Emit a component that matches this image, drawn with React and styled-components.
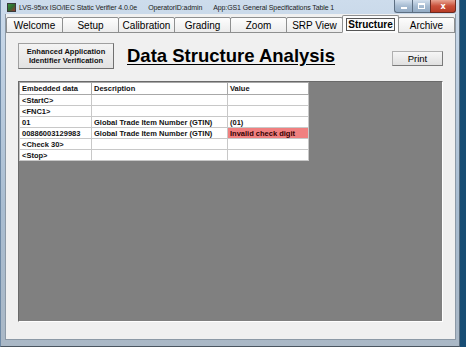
import React from "react";
import styled, { createGlobalStyle } from "styled-components";

const Global = createGlobalStyle`
  html, body { margin: 0; padding: 0; }
  body {
    width: 466px;
    height: 347px;
    overflow: hidden;
    background: #1f5d86;
    font-family: "Liberation Sans", Arial, sans-serif;
  }
`;

const tabs = ["Welcome", "Setup", "Calibration", "Grading", "Zoom", "SRP View", "Structure", "Archive"];

const rows = [
  { data: "<StartC>", desc: "", value: "" },
  { data: "<FNC1>", desc: "", value: "" },
  { data: "01", desc: "Global Trade Item Number (GTIN)", value: "(01)" },
  { data: "00886003129983", desc: "Global Trade Item Number (GTIN)", value: "Invalid check digit", error: true },
  { data: "<Check 30>", desc: "", value: "" },
  { data: "<Stop>", desc: "", value: "" },
];

const App = () => {
  return (
    <>
      <Global />
      <Desktop>
        <Frame>
          <TitleBar>
            <AppIcon />
            <TitleText>LVS-95xx ISO/IEC Static Verifier 4.0.0e</TitleText>
            <TitleText>OperatorID:admin</TitleText>
            <TitleText>App:GS1 General Specifications Table 1</TitleText>
            <Controls>
              <CtrlButton>
                <MinGlyph />
              </CtrlButton>
              <CtrlButton>
                <MaxGlyph />
              </CtrlButton>
              <CloseButton>x</CloseButton>
            </Controls>
          </TitleBar>

          <Client>
            <TabRow>
              {tabs.map((t) => (
                <Tab key={t} $active={t === "Structure"}>
                  {t === "Structure" ? <Focus>{t}</Focus> : t}
                </Tab>
              ))}
            </TabRow>

            <Page>
              <Header>
                <AiButton>
                  Enhanced Application
                  <br />
                  Identifier Verification
                </AiButton>
                <Heading>Data Structure Analysis</Heading>
                <PrintButton>Print</PrintButton>
              </Header>

              <GrayPanel>
                <Table>
                  <colgroup>
                    <col style={{ width: "72px" }} />
                    <col style={{ width: "136px" }} />
                    <col style={{ width: "81px" }} />
                  </colgroup>
                  <thead>
                    <tr>
                      <Th>Embedded data</Th>
                      <Th>Description</Th>
                      <Th>Value</Th>
                    </tr>
                  </thead>
                  <tbody>
                    {rows.map((r, i) => (
                      <tr key={i}>
                        <Td>{r.data}</Td>
                        <Td>{r.desc}</Td>
                        <Td $error={r.error}>{r.value}</Td>
                      </tr>
                    ))}
                  </tbody>
                </Table>
              </GrayPanel>
            </Page>
          </Client>
        </Frame>
      </Desktop>
    </>
  );
};

const Desktop = styled.div`
  width: 466px;
  height: 347px;
  display: flex;
  background: linear-gradient(90deg, #2a6d96, #174d74);
`;

const Frame = styled.div`
  width: 460px;
  height: 347px;
  box-sizing: border-box;
  display: flex;
  flex-direction: column;
  padding: 0 3px 6px 4px;
  background: linear-gradient(180deg, #cddcec 0%, #bfd0e2 20%, #a9bdd1 60%, #aab8c6 100%);
  border-right: 1px solid #5a6c7c;
  border-bottom: 1px solid #4a5560;
  border-left: 1px solid #6f8aa6;
`;

const TitleBar = styled.div`
  height: 14px;
  display: flex;
  align-items: center;
  gap: 11px;
  padding-left: 2px;
  position: relative;
`;

const AppIcon = styled.div`
  width: 7px;
  height: 7px;
  background: linear-gradient(135deg, #3b8f3b 0%, #2f6c2f 50%, #9c3030 100%);
  border: 1px solid #3a3a3a;
  margin-right: -8px;
`;

const TitleText = styled.span`
  font-family: "Liberation Sans", Arial, sans-serif;
  font-size: 7px;
  letter-spacing: -0.1px;
  color: #1b1b1b;
  white-space: nowrap;
`;

const Controls = styled.div`
  position: absolute;
  right: 0;
  top: 0;
  display: flex;
`;

const CtrlButton = styled.div`
  width: 17px;
  height: 12px;
  display: flex;
  align-items: center;
  justify-content: center;
  background: linear-gradient(180deg, #d3e0ee 0%, #a7bcd2 50%, #93abc4 100%);
  border: 1px solid #5d6f82;
  border-top: none;
  border-right: none;
  &:first-child { border-bottom-left-radius: 3px; }
`;

const MinGlyph = styled.span`
  width: 6px;
  height: 2px;
  margin-top: 4px;
  background: #fff;
`;

const MaxGlyph = styled.span`
  width: 5px;
  height: 3px;
  border: 1px solid #fff;
  border-top-width: 2px;
`;

const CloseButton = styled.div`
  width: 24px;
  height: 12px;
  display: flex;
  align-items: center;
  justify-content: center;
  font-family: "DejaVu Sans", sans-serif;
  font-weight: bold;
  font-size: 8px;
  color: #fff;
  background: linear-gradient(180deg, #e8a593 0%, #c9503a 50%, #b83b25 100%);
  border: 1px solid #6b2a20;
  border-top: none;
  border-bottom-right-radius: 3px;
`;

const Client = styled.div`
  flex: 1;
  display: flex;
  flex-direction: column;
  background: #f0f0f0;
  border: 1px solid #8c99a6;
  border-top: none;
`;

const TabRow = styled.div`
  display: flex;
  align-items: flex-end;
  height: 19px;
  margin-bottom: -1px;
  position: relative;
  z-index: 1;
`;

const Tab = styled.div`
  flex: 1;
  height: ${(p) => (p.$active ? "18px" : "16px")};
  box-sizing: border-box;
  display: flex;
  align-items: center;
  justify-content: center;
  font-size: 10px;
  font-weight: ${(p) => (p.$active ? "bold" : "normal")};
  color: #000;
  background: ${(p) => (p.$active ? "#fbfbfb" : "linear-gradient(180deg, #fdfdfd 0%, #ececec 100%)")};
  border: 1px solid #8e8f8f;
  border-bottom: ${(p) => (p.$active ? "1px solid #fbfbfb" : "1px solid #8e8f8f")};
  border-radius: 2px 2px 0 0;
  margin-left: -1px;
  &:first-child { margin-left: 0; }
`;

const Focus = styled.span`
  border: 1px solid #555;
  padding: 0 1px;
  line-height: 11px;
`;

const Page = styled.div`
  flex: 1;
  display: flex;
  flex-direction: column;
  padding: 10px 12px 17px 12px;
  background: #f0f0f0;
  border-top: 1px solid #8e8f8f;
`;

const Header = styled.div`
  display: flex;
  align-items: flex-start;
  height: 38px;
`;

const AiButton = styled.div`
  width: 96px;
  height: 26px;
  box-sizing: border-box;
  display: flex;
  align-items: center;
  justify-content: center;
  text-align: center;
  font-size: 7.5px;
  font-weight: bold;
  line-height: 9px;
  color: #111;
  background: linear-gradient(180deg, #f4f4f4 0%, #e2e2e2 100%);
  border: 1px solid #a0a0a0;
  border-right-color: #707070;
  border-bottom-color: #707070;
`;

const Heading = styled.div`
  margin-left: 13px;
  margin-top: 2px;
  font-size: 18.5px;
  font-weight: bold;
  text-decoration: underline;
  text-underline-offset: 2px;
  color: #000;
  white-space: nowrap;
`;

const PrintButton = styled.div`
  margin-left: auto;
  margin-top: 8px;
  width: 51px;
  height: 15px;
  box-sizing: border-box;
  display: flex;
  align-items: center;
  justify-content: center;
  font-size: 9.5px;
  color: #000;
  background: linear-gradient(180deg, #f6f6f6 0%, #e0e0e0 100%);
  border: 1px solid #b0b0b0;
  border-right-color: #7a7a7a;
  border-bottom-color: #7a7a7a;
`;

const GrayPanel = styled.div`
  flex: 1;
  background: #808080;
  border: 1px solid #6a6a6a;
  border-right-color: #fff;
  border-bottom-color: #fff;
`;

const Table = styled.table`
  width: 289px;
  border-collapse: collapse;
  background: #fff;
  table-layout: fixed;
  font-size: 7.5px;
  font-weight: bold;
  color: #111;
`;

const Th = styled.th`
  height: 11px;
  padding: 0 2px;
  text-align: left;
  font-weight: bold;
  border: 1px solid #a8a8a8;
  white-space: nowrap;
  overflow: hidden;
`;

const Td = styled.td`
  height: 10px;
  padding: 0 2px;
  border: 1px solid #c8c8c8;
  white-space: nowrap;
  overflow: hidden;
  background: ${(p) => (p.$error ? "#f08080" : "#fff")};
  color: ${(p) => (p.$error ? "#300" : "#111")};
`;

export default App;
